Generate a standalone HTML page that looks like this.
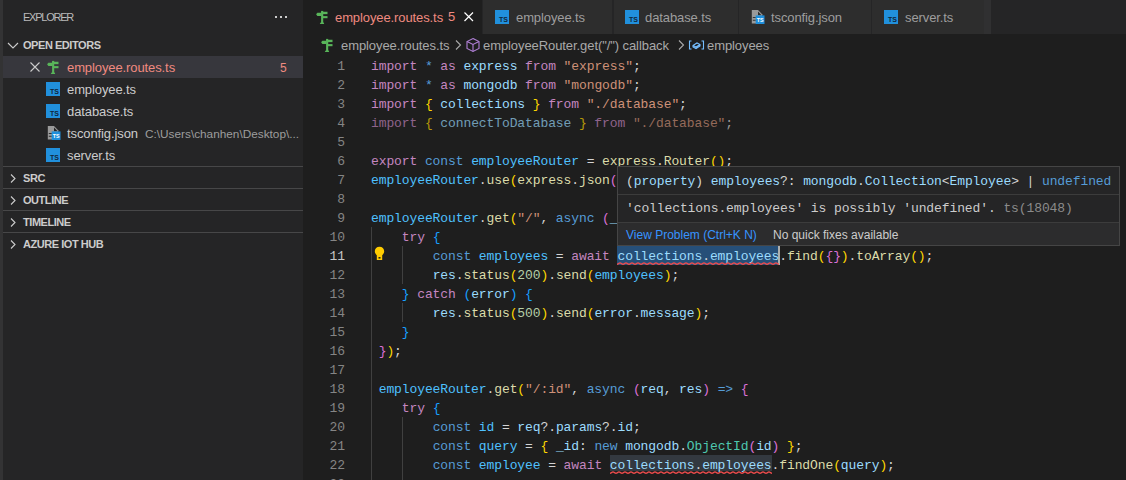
<!DOCTYPE html>
<html><head><meta charset="utf-8">
<style>
*{margin:0;padding:0;box-sizing:border-box}
html,body{width:1126px;height:480px;overflow:hidden;background:#1e1e1e}
body{position:relative;font-family:"Liberation Sans",sans-serif}
.a{position:absolute}
#side{left:0;top:0;width:303px;height:480px;background:#252526}
#strip{left:0;top:0;width:3px;height:480px;background:#333334}
.sh{color:#bbbbbb;font-size:11px}
.hdr{font-weight:bold;font-size:11px;color:#cccccc;letter-spacing:-0.45px}
.row{left:3px;width:300px;height:22px}
.fn{margin-top:1px;font-size:13px;letter-spacing:-0.1px;color:#cccccc;line-height:22px;white-space:pre}
.sep{left:3px;width:300px;height:1px;background:#474748}
.chev{position:absolute}
#tabs{left:303px;top:0;width:823px;height:34px;background:#252526}
.tab{top:0;height:34px;background:#2d2d2d;border-right:1px solid #252526}
.tt{font-size:13px;letter-spacing:-0.1px;line-height:35px;white-space:pre;color:#9e9e9e}
.bc{font-size:13px;letter-spacing:-0.08px;line-height:22px;margin-top:1px;white-space:pre;color:#a9a9a9}
.ln{position:absolute;margin-top:1px;left:303px;width:42px;text-align:right;font-family:"Liberation Mono",monospace;font-size:13px;letter-spacing:-0.1px;line-height:19px;height:19px;color:#858585}
.cl{position:absolute;margin-top:1px;left:371px;font-family:"Liberation Mono",monospace;font-size:13px;letter-spacing:-0.1px;line-height:19px;height:19px;white-space:pre;color:#d4d4d4}
.k{color:#c586c0}.s{color:#569cd6}.v{color:#9cdcfe}.c{color:#4fc1ff}.f{color:#dcdcaa}.st{color:#ce9178}.n{color:#b5cea8}
.b1{color:#ffd700}.b2{color:#da70d6}.b3{color:#179fff}.ty{color:#4ec9b0}
.guide{position:absolute;width:1px;background:#404040}
#hover{left:617px;top:166px;width:503px;height:80px;background:#252526;border:1px solid #454545}
.hm{position:absolute;left:8px;font-family:"Liberation Mono",monospace;font-size:13px;letter-spacing:-0.1px;white-space:pre;line-height:19px;color:#cccccc}
</style></head><body>
<div id="side" class="a">
  <div id="strip" class="a"></div>
  <div class="a sh" style="left:23px;top:11px;letter-spacing:-1.25px">EXPLORER</div>
  <div class="a" style="left:275px;top:16px;width:2px;height:2px;background:#cccccc"></div>
  <div class="a" style="left:280px;top:16px;width:2px;height:2px;background:#cccccc"></div>
  <div class="a" style="left:285px;top:16px;width:2px;height:2px;background:#cccccc"></div>
  <!-- open editors header -->
  <svg class="a" style="left:5px;top:37px" width="16" height="16" viewBox="0 0 16 16"><path d="M3 6 L8 11 L13 6" fill="none" stroke="#cccccc" stroke-width="1.1"/></svg>
  <div class="a hdr" style="left:23px;top:39px">OPEN EDITORS</div>
  <!-- rows -->
  <div class="a row" style="top:56px;background:#37373d"></div>
  <svg class="a" style="left:27px;top:59px" width="16" height="16" viewBox="0 0 16 16"><path d="M3.5 3.5 L12.5 12.5 M12.5 3.5 L3.5 12.5" stroke="#cccccc" stroke-width="1.1"/></svg>
  <svg class="a" style="left:45px;top:59px" width="16" height="16" viewBox="0 0 16 16"><g fill="#59b55a"><rect x="7.1" y="1.9" width="2.1" height="13"/><path d="M5.8 15 L6.6 13.4 L9.6 13.4 L10.2 15 Z"/><rect x="7.5" y="2.75" width="6" height="2.4"/><path d="M2.1 5.3 L3.4 3.8 L7.5 3.8 L7.5 6.9 L3.4 6.9 Z"/><rect x="8.75" y="7.1" width="4.75" height="2.1"/></g></svg>
  <div class="a fn" style="left:67px;top:56px;color:#f08a80">employee.routes.ts</div>
  <div class="a fn" style="left:280px;top:56px;color:#f08a80;font-size:12px">5</div>

  <svg class="a" style="left:46px;top:82px" width="14" height="14" viewBox="0 0 14 14"><rect width="14" height="14" fill="#2190dc"/><text x="4" y="12" font-family="Liberation Sans" font-weight="bold" font-size="7" fill="#10263b">TS</text></svg>
  <div class="a fn" style="left:67px;top:78px">employee.ts</div>
  <svg class="a" style="left:46px;top:104px" width="14" height="14" viewBox="0 0 14 14"><rect width="14" height="14" fill="#2190dc"/><text x="4" y="12" font-family="Liberation Sans" font-weight="bold" font-size="7" fill="#10263b">TS</text></svg>
  <div class="a fn" style="left:67px;top:100px">database.ts</div>
  <svg class="a" style="left:46px;top:125px" width="16" height="16" viewBox="0 0 16 16"><path d="M1.8 1 L8 1 L12.2 5.2 L12.2 14.5 L1.8 14.5 Z" fill="#9a9a9a"/><path d="M8 2.6 L8 6.2 L11.6 6.2 Z" fill="#252526"/><rect x="2.8" y="8" width="3" height="0.9" fill="#252526"/><rect x="2.8" y="10.8" width="3" height="0.9" fill="#252526"/><rect x="5.7" y="6.4" width="8.8" height="8.6" fill="#1f8fdc"/><text x="6.8" y="12.9" font-family="Liberation Sans" font-weight="bold" font-size="6" textLength="6.8" lengthAdjust="spacingAndGlyphs" fill="#ffffff">TS</text></svg>
  <div class="a fn" style="left:67px;top:122px">tsconfig.json</div>
  <div class="a fn" style="left:145px;top:122px;font-size:11.8px;letter-spacing:0;color:#9d9d9d">C:\Users\chanhen\Desktop\...</div>
  <svg class="a" style="left:46px;top:148px" width="14" height="14" viewBox="0 0 14 14"><rect width="14" height="14" fill="#2190dc"/><text x="4" y="12" font-family="Liberation Sans" font-weight="bold" font-size="7" fill="#10263b">TS</text></svg>
  <div class="a fn" style="left:67px;top:144px">server.ts</div>

  <div class="a sep" style="top:166px"></div>
  <svg class="a" style="left:6px;top:170px" width="16" height="16" viewBox="0 0 16 16"><path d="M5 4.5 L9 8.5 L5 12.5" fill="none" stroke="#cccccc" stroke-width="1.1"/></svg>
  <div class="a hdr" style="left:23px;top:172px">SRC</div>
  <div class="a sep" style="top:188px"></div>
  <svg class="a" style="left:6px;top:192px" width="16" height="16" viewBox="0 0 16 16"><path d="M5 4.5 L9 8.5 L5 12.5" fill="none" stroke="#cccccc" stroke-width="1.1"/></svg>
  <div class="a hdr" style="left:23px;top:194px">OUTLINE</div>
  <div class="a sep" style="top:210px"></div>
  <svg class="a" style="left:6px;top:214px" width="16" height="16" viewBox="0 0 16 16"><path d="M5 4.5 L9 8.5 L5 12.5" fill="none" stroke="#cccccc" stroke-width="1.1"/></svg>
  <div class="a hdr" style="left:23px;top:216px">TIMELINE</div>
  <div class="a sep" style="top:232px"></div>
  <svg class="a" style="left:6px;top:236px" width="16" height="16" viewBox="0 0 16 16"><path d="M5 4.5 L9 8.5 L5 12.5" fill="none" stroke="#cccccc" stroke-width="1.1"/></svg>
  <div class="a hdr" style="left:23px;top:238px">AZURE IOT HUB</div>
</div>

<!-- TABS -->
<div id="tabs" class="a"></div>
<div class="a tab" style="left:303px;width:180px;background:#1e1e1e;border-right:1px solid #252526"></div>
<svg class="a" style="left:314px;top:9px" width="16" height="16" viewBox="0 0 16 16"><g fill="#59b55a"><rect x="7.1" y="1.9" width="2.1" height="13"/><path d="M5.8 15 L6.6 13.4 L9.6 13.4 L10.2 15 Z"/><rect x="7.5" y="2.75" width="6" height="2.4"/><path d="M2.1 5.3 L3.4 3.8 L7.5 3.8 L7.5 6.9 L3.4 6.9 Z"/><rect x="8.75" y="7.1" width="4.75" height="2.1"/></g></svg>
<div class="a tt" style="left:335px;top:0;color:#f08a80">employee.routes.ts</div>
<div class="a tt" style="left:448px;top:-1px;color:#f08a80">5</div>
<svg class="a" style="left:461px;top:9px" width="16" height="16" viewBox="0 0 16 16"><path d="M3.5 3.5 L12 12 M12 3.5 L3.5 12" stroke="#ffffff" stroke-width="1.2"/></svg>

<div class="a tab" style="left:483px;width:130px"></div>
<svg class="a" style="left:495px;top:10px" width="14" height="14" viewBox="0 0 14 14"><rect width="14" height="14" fill="#2190dc"/><text x="4" y="12" font-family="Liberation Sans" font-weight="bold" font-size="7" fill="#10263b">TS</text></svg>
<div class="a tt" style="left:516px;top:0">employee.ts</div>

<div class="a tab" style="left:614px;width:125px"></div>
<svg class="a" style="left:625px;top:10px" width="14" height="14" viewBox="0 0 14 14"><rect width="14" height="14" fill="#2190dc"/><text x="4" y="12" font-family="Liberation Sans" font-weight="bold" font-size="7" fill="#10263b">TS</text></svg>
<div class="a tt" style="left:645px;top:0">database.ts</div>

<div class="a tab" style="left:739px;width:133px"></div>
<svg class="a" style="left:750px;top:9px" width="16" height="16" viewBox="0 0 16 16"><path d="M1.8 1 L8 1 L12.2 5.2 L12.2 14.5 L1.8 14.5 Z" fill="#9a9a9a"/><path d="M8 2.6 L8 6.2 L11.6 6.2 Z" fill="#2d2d2d"/><rect x="2.8" y="8" width="3" height="0.9" fill="#2d2d2d"/><rect x="2.8" y="10.8" width="3" height="0.9" fill="#2d2d2d"/><rect x="5.7" y="6.4" width="8.8" height="8.6" fill="#1f8fdc"/><text x="6.8" y="12.9" font-family="Liberation Sans" font-weight="bold" font-size="6" textLength="6.8" lengthAdjust="spacingAndGlyphs" fill="#ffffff">TS</text></svg>
<div class="a tt" style="left:771px;top:0">tsconfig.json</div>

<div class="a tab" style="left:872px;width:119px"></div><div class="a" style="left:984px;top:0;width:7px;height:34px;background:#303031"></div>
<svg class="a" style="left:884px;top:10px" width="14" height="14" viewBox="0 0 14 14"><rect width="14" height="14" fill="#2190dc"/><text x="4" y="12" font-family="Liberation Sans" font-weight="bold" font-size="7" fill="#10263b">TS</text></svg>
<div class="a tt" style="left:905px;top:0">server.ts</div>

<!-- BREADCRUMBS -->
<svg class="a" style="left:319px;top:37px" width="16" height="16" viewBox="0 0 16 16"><g fill="#59b55a"><rect x="7.1" y="1.9" width="2.1" height="13"/><path d="M5.8 15 L6.6 13.4 L9.6 13.4 L10.2 15 Z"/><rect x="7.5" y="2.75" width="6" height="2.4"/><path d="M2.1 5.3 L3.4 3.8 L7.5 3.8 L7.5 6.9 L3.4 6.9 Z"/><rect x="8.75" y="7.1" width="4.75" height="2.1"/></g></svg>
<div class="a bc" style="left:341px;top:34px">employee.routes.ts</div>
<svg class="a" style="left:450px;top:37px" width="16" height="16" viewBox="0 0 16 16"><path d="M6 3.5 L10.5 8 L6 12.5" fill="none" stroke="#a9a9a9" stroke-width="1.1"/></svg>
<svg class="a" style="left:465px;top:37px" width="16" height="16" viewBox="0 0 16 16"><g fill="none" stroke="#b180d7" stroke-width="1.1"><path d="M8 1.5 L14 4.5 L14 11.5 L8 14.5 L2 11.5 L2 4.5 Z"/><path d="M2 4.5 L8 7.5 L14 4.5 M8 7.5 L8 14.5"/></g></svg>
<div class="a bc" style="left:483px;top:34px">employeeRouter.get("/") callback</div>
<svg class="a" style="left:673px;top:37px" width="16" height="16" viewBox="0 0 16 16"><path d="M6 3.5 L10.5 8 L6 12.5" fill="none" stroke="#a9a9a9" stroke-width="1.1"/></svg>
<svg class="a" style="left:688px;top:37px" width="17" height="16" viewBox="0 0 17 16"><g fill="none" stroke="#75beff" stroke-width="1.1"><path d="M3.5 4 L1.5 4 L1.5 12 L3.5 12 M13.5 4 L15.5 4 L15.5 12 L13.5 12"/><path d="M5 8.5 L9 6 L12 7.5 L12 9 L8 11.5 L5 10 Z M5 8.5 L8 10 L12 7.5 M8 10 L8 11.5"/></g></svg>
<div class="a bc" style="left:707px;top:34px">employees</div>

<!-- LINE NUMBERS -->
<div class="ln" style="top:56px">1</div>
<div class="ln" style="top:75px">2</div>
<div class="ln" style="top:94px">3</div>
<div class="ln" style="top:113px">4</div>
<div class="ln" style="top:132px">5</div>
<div class="ln" style="top:151px">6</div>
<div class="ln" style="top:170px">7</div>
<div class="ln" style="top:189px">8</div>
<div class="ln" style="top:208px">9</div>
<div class="ln" style="top:227px">10</div>
<div class="ln" style="top:246px;color:#c6c6c6">11</div>
<div class="ln" style="top:265px">12</div>
<div class="ln" style="top:284px">13</div>
<div class="ln" style="top:303px">14</div>
<div class="ln" style="top:322px">15</div>
<div class="ln" style="top:341px">16</div>
<div class="ln" style="top:360px">17</div>
<div class="ln" style="top:379px">18</div>
<div class="ln" style="top:398px">19</div>
<div class="ln" style="top:417px">20</div>
<div class="ln" style="top:436px">21</div>
<div class="ln" style="top:455px">22</div>
<div class="ln" style="top:474px">23</div>

<!-- GUIDES -->
<div class="guide" style="left:371px;top:227px;height:253px"></div>
<div class="guide" style="left:402px;top:246px;height:38px"></div>
<div class="guide" style="left:402px;top:303px;height:19px"></div>
<div class="guide" style="left:402px;top:417px;height:63px"></div>

<!-- SELECTION line 11 -->
<div class="a" style="left:617px;top:246px;width:161px;height:19px;background:#264f78"></div>
<div class="a" style="left:778px;top:246px;width:2px;height:19px;background:#aeafad"></div>

<!-- highlight line 22 -->
<div class="a" style="left:610px;top:455px;width:162px;height:16px;background:#333940"></div>
<!-- CODE -->
<div class="cl" style="top:56px"><span class="k">import</span> <span class="s">*</span> <span class="k">as</span> <span class="v">express</span> <span class="k">from</span> <span class="st">"express"</span>;</div>
<div class="cl" style="top:75px"><span class="k">import</span> <span class="s">*</span> <span class="k">as</span> <span class="v">mongodb</span> <span class="k">from</span> <span class="st">"mongodb"</span>;</div>
<div class="cl" style="top:94px"><span class="k">import</span> <span class="b1">{</span> <span class="v">collections</span> <span class="b1">}</span> <span class="k">from</span> <span class="st">"./database"</span>;</div>
<div class="cl" style="top:113px;opacity:0.67"><span class="k">import</span> <span class="b1">{</span> <span class="v">connectToDatabase</span> <span class="b1">}</span> <span class="k">from</span> <span class="st">"./database"</span>;</div>
<div class="cl" style="top:151px"><span class="k">export</span> <span class="s">const</span> <span class="c">employeeRouter</span> = <span class="f">express</span>.<span class="f">Router</span><span class="b1">()</span>;</div>
<div class="cl" style="top:170px"><span class="c">employeeRouter</span>.<span class="f">use</span><span class="b1">(</span><span class="f">express</span>.<span class="f">json</span><span class="b2">()</span><span class="b1">)</span>;</div>
<div class="cl" style="top:208px"><span class="c">employeeRouter</span>.<span class="f">get</span><span class="b1">(</span><span class="st">"/"</span>, <span class="s">async</span> <span class="b2">(</span><span class="v">_req</span>, <span class="v">res</span><span class="b2">)</span> <span class="s">=&gt;</span> <span class="b2">{</span></div>
<div class="cl" style="top:227px">    <span class="k">try</span> <span class="b3">{</span></div>
<div class="cl" style="top:246px">        <span class="s">const</span> <span class="c">employees</span> = <span class="k">await</span> <span class="v">collections</span>.<span class="v">employees</span>.<span class="f">find</span><span class="b1">(</span><span class="b2">{}</span><span class="b1">)</span>.<span class="f">toArray</span><span class="b1">()</span>;</div>
<div class="cl" style="top:265px">        <span class="v">res</span>.<span class="f">status</span><span class="b1">(</span><span class="n">200</span><span class="b1">)</span>.<span class="f">send</span><span class="b1">(</span><span class="c">employees</span><span class="b1">)</span>;</div>
<div class="cl" style="top:284px">    <span class="b3">}</span> <span class="k">catch</span> <span class="b3">(</span><span class="v">error</span><span class="b3">)</span> <span class="b3">{</span></div>
<div class="cl" style="top:303px">        <span class="v">res</span>.<span class="f">status</span><span class="b1">(</span><span class="n">500</span><span class="b1">)</span>.<span class="f">send</span><span class="b1">(</span><span class="v">error</span>.<span class="v">message</span><span class="b1">)</span>;</div>
<div class="cl" style="top:322px">    <span class="b3">}</span></div>
<div class="cl" style="top:341px"> <span class="b2">}</span><span class="b1">)</span>;</div>
<div class="cl" style="top:379px"> <span class="c">employeeRouter</span>.<span class="f">get</span><span class="b1">(</span><span class="st">"/:id"</span>, <span class="s">async</span> <span class="b2">(</span><span class="v">req</span>, <span class="v">res</span><span class="b2">)</span> <span class="s">=&gt;</span> <span class="b2">{</span></div>
<div class="cl" style="top:398px">    <span class="k">try</span> <span class="b3">{</span></div>
<div class="cl" style="top:417px">        <span class="s">const</span> <span class="c">id</span> = <span class="v">req</span>?.<span class="v">params</span>?.<span class="v">id</span>;</div>
<div class="cl" style="top:436px">        <span class="s">const</span> <span class="c">query</span> = <span class="b1">{</span> <span class="v">_id</span>: <span class="s">new</span> <span class="v">mongodb</span>.<span class="ty">ObjectId</span><span class="b2">(</span><span class="v">id</span><span class="b2">)</span> <span class="b1">}</span>;</div>
<div class="cl" style="top:455px">        <span class="s">const</span> <span class="c">employee</span> = <span class="k">await</span> <span class="v">collections</span>.<span class="v">employees</span>.<span class="f">findOne</span><span class="b1">(</span><span class="v">query</span><span class="b1">)</span>;</div>

<!-- SQUIGGLES -->
<svg class="a" style="left:617px;top:262px" width="162" height="3" viewBox="0 0 162 3"><defs><pattern id="w1" width="6" height="3" patternUnits="userSpaceOnUse"><path d="M-3 0.9 C-2 0.9 -1 2.3 0 2.3 C1 2.3 2 0.9 3 0.9 C4 0.9 5 2.3 6 2.3 C7 2.3 8 0.9 9 0.9" fill="none" stroke="#f14c4c" stroke-width="1.4"/></pattern></defs><rect width="162" height="3" fill="url(#w1)"/></svg>
<svg class="a" style="left:610px;top:471px" width="162" height="3" viewBox="0 0 162 3"><defs><pattern id="w2" width="6" height="3" patternUnits="userSpaceOnUse"><path d="M-3 0.9 C-2 0.9 -1 2.3 0 2.3 C1 2.3 2 0.9 3 0.9 C4 0.9 5 2.3 6 2.3 C7 2.3 8 0.9 9 0.9" fill="none" stroke="#f14c4c" stroke-width="1.4"/></pattern></defs><rect width="162" height="3" fill="url(#w2)"/></svg>
<!-- HOVER -->
<div id="hover" class="a">
  <div class="hm" style="top:5px"><span style="color:#d4d4d4">(</span><span class="v">property</span><span style="color:#d4d4d4">)</span> <span class="v">employees</span><span style="color:#d4d4d4">?: </span><span class="v">mongodb</span><span style="color:#d4d4d4">.</span><span class="v">Collection</span><span style="color:#d4d4d4">&lt;</span><span class="v">Employee</span><span style="color:#d4d4d4">&gt; | </span><span class="s">undefined</span></div>
  <div class="a" style="left:0;top:27px;width:501px;height:1px;background:#3c3c3c"></div>
  <div class="hm" style="top:32px">'collections.employees' is possibly 'undefined'. <span style="color:#8b8b8b">ts(18048)</span></div>
  <div class="a" style="left:0;top:55px;width:501px;height:23px;background:#2c2c2d;border-top:1px solid #3c3c3c"></div>
  <div class="a" style="left:8px;top:57px;font-size:12px;line-height:23px;color:#3794ff;white-space:pre">View Problem (Ctrl+K N)</div>
  <div class="a" style="left:155px;top:57px;font-size:12px;line-height:23px;color:#cccccc;white-space:pre">No quick fixes available</div>
</div>

<!-- LIGHTBULB -->
<svg class="a" style="left:373px;top:246px" width="13" height="15" viewBox="0 0 13 15"><path d="M6.5 0.8 C3.7 0.8 1.8 2.8 1.8 5.3 C1.8 7.1 2.9 8.3 3.8 9.2 L3.8 14 L9.2 14 L9.2 9.2 C10.1 8.3 11.2 7.1 11.2 5.3 C11.2 2.8 9.3 0.8 6.5 0.8 Z" fill="#ffcc00"/><rect x="5.5" y="11" width="2" height="1.6" fill="#1e1e1e"/></svg>
</body></html>
